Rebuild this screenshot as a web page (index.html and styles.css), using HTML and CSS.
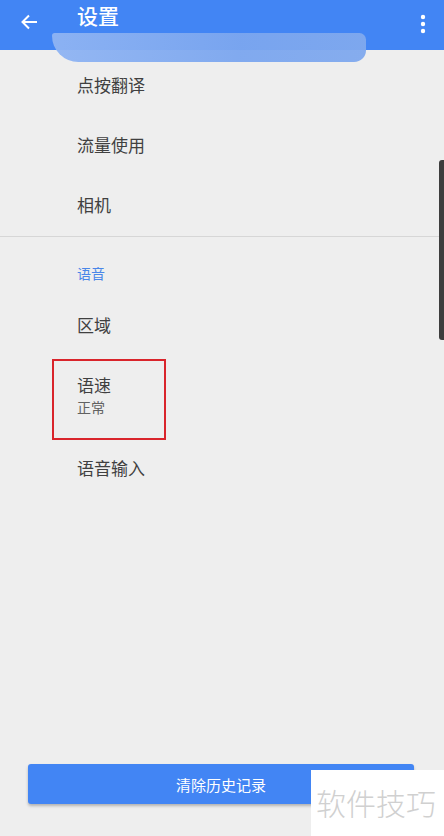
FILE: index.html
```html
<!DOCTYPE html>
<html lang="zh-CN">

<head>
    <meta charset="UTF-8">
    <meta name="viewport" content="width=device-width, initial-scale=1.0">
    <title>设置</title>
    <link rel="stylesheet" href="styles.css">
</head>

<body>
    <div class="page">
        <header class="toolbar">
            <svg class="back" width="18" height="18" viewBox="0 0 18 18">
                <path d="M17 9H3M9 2.5L2.5 9 9 15.5" fill="none" stroke="#fff" stroke-width="2" />
            </svg>
            <h1 class="title">设置</h1>
            <svg class="more" width="6" height="20" viewBox="0 0 6 20">
                <circle cx="3" cy="3" r="2.2" fill="#fff" />
                <circle cx="3" cy="10" r="2.2" fill="#fff" />
                <circle cx="3" cy="17" r="2.2" fill="#fff" />
            </svg>
            <div class="smudge"></div>
        </header>

        <main class="list">
            <div class="item">点按翻译</div>
            <div class="item">流量使用</div>
            <div class="item">相机</div>
            <hr class="divider">
            <div class="section">语音</div>
            <div class="item">区域</div>
            <div class="item two-line">
                <span>语速</span>
                <span class="summary">正常</span>
                <div class="mark"></div>
            </div>
            <div class="item">语音输入</div>
        </main>

        <footer class="footer">
            <button class="clear-btn">清除历史记录</button>
        </footer>

        <div class="scrollbar"></div>
        <div class="watermark">软件技巧</div>
    </div>
</body>

</html>
```

FILE: styles.css
```css
* {
    box-sizing: border-box;
}

body {
    margin: 0;
    background: #eeeeee;
    font-family: "Noto Sans CJK SC", "Noto Sans", sans-serif;
}

.page {
    position: relative;
    height: 836px;
    display: flex;
    flex-direction: column;
    overflow: hidden;
}

.toolbar {
    position: relative;
    height: 50px;
    background: #4285f4;
    display: flex;
    align-items: flex-start;
    padding: 0 18px 0 20px;
}

.back {
    margin-top: 13px;
}

.title {
    margin: 0 0 0 39px;
    font-size: 21px;
    font-weight: 500;
    line-height: 30px;
    color: #fff;
}

.more {
    margin-left: auto;
    margin-top: 14px;
}

.smudge {
    position: absolute;
    left: 52px;
    top: 33px;
    width: 314px;
    height: 29px;
    background: linear-gradient(90deg, #8fb4f3, #7ba6ef 60%, #80a9ee);
    border-radius: 4px 10px 18px 40px;
    opacity: 0.95;
}

.list {
    flex: 1;
    padding-top: 4px;
}

.item {
    position: relative;
    height: 60px;
    display: flex;
    align-items: center;
    padding-left: 77px;
    font-size: 17px;
    color: #404040;
}

.divider {
    margin: 2px 4px 0 0;
    border: none;
    border-top: 1px solid #d6d6d6;
}

.section {
    padding: 26px 0 11px 77px;
    font-size: 14px;
    line-height: 20px;
    color: #4a86e8;
}

.two-line {
    height: 83px;
    flex-direction: column;
    align-items: flex-start;
    justify-content: center;
    line-height: 22px;
}

.summary {
    font-size: 14px;
    color: #616161;
}

.mark {
    position: absolute;
    left: 52px;
    top: 5px;
    width: 114px;
    height: 81px;
    border: 2px solid #d9242b;
}

.footer {
    padding: 0 30px 32px 28px;
}

.clear-btn {
    width: 100%;
    height: 40px;
    border: none;
    border-radius: 3px;
    background: #4285f4;
    color: #fff;
    font-family: inherit;
    font-size: 15px;
    box-shadow: 0 2px 3px rgba(0, 0, 0, 0.25);
}

.scrollbar {
    position: absolute;
    right: 0;
    top: 160px;
    width: 5px;
    height: 180px;
    background: #3d3d3d;
    border-radius: 3px 0 0 3px;
}

.watermark {
    position: absolute;
    right: 0;
    bottom: 0;
    width: 133px;
    height: 66px;
    background: #fff;
    color: #d0d0d0;
    font-size: 30px;
    font-weight: 300;
    line-height: 64px;
    padding-left: 5px;
}
```
